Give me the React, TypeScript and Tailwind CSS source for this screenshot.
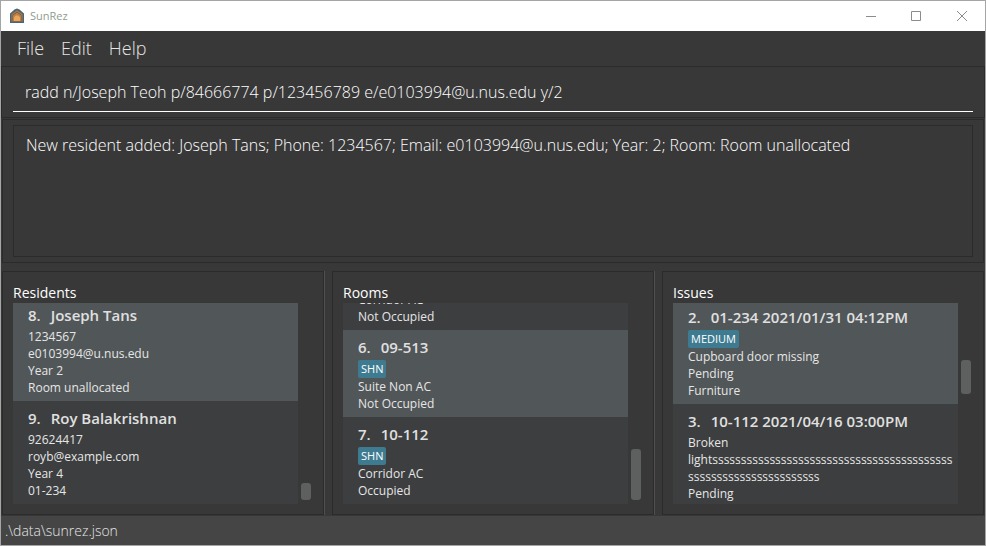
import { useLayoutEffect, useRef, useState } from "react";

type Item = {
  number?: string;
  title?: string;
  tag?: string;
  lines: string[];
  selected?: boolean;
};

type PanelData = {
  name: string;
  items: Item[];
  scroll: number;
  thumbTop: number;
  thumbHeight: number;
};

const panels: PanelData[] = [
  {
    name: "Residents",
    scroll: 5,
    thumbTop: 180,
    thumbHeight: 17,
    items: [
      {
        number: "8.",
        title: "Joseph Tans",
        lines: ["1234567", "e0103994@u.nus.edu", "Year 2", "Room unallocated"],
        selected: true,
      },
      {
        number: "9.",
        title: "Roy Balakrishnan",
        lines: ["92624417", "royb@example.com", "Year 4", "01-234"],
      },
    ],
  },
  {
    name: "Rooms",
    scroll: 17,
    thumbTop: 146,
    thumbHeight: 51,
    items: [
      { lines: ["Corridor AC", "Not Occupied"] },
      {
        number: "6.",
        title: "09-513",
        tag: "SHN",
        lines: ["Suite Non AC", "Not Occupied"],
        selected: true,
      },
      { number: "7.", title: "10-112", tag: "SHN", lines: ["Corridor AC", "Occupied"] },
    ],
  },
  {
    name: "Issues",
    scroll: 3,
    thumbTop: 57,
    thumbHeight: 34,
    items: [
      {
        number: "2.",
        title: "01-234 2021/01/31 04:12PM",
        tag: "MEDIUM",
        lines: ["Cupboard door missing", "Pending", "Furniture"],
        selected: true,
      },
      {
        number: "3.",
        title: "10-112 2021/04/16 03:00PM",
        lines: ["Broken", "light" + "s".repeat(65), "Pending"],
      },
    ],
  },
];

function HouseIcon() {
  return (
    <svg width="16" height="16" viewBox="0 0 16 16" aria-hidden="true">
      <path d="M1 5.500 5.500 1.500 8 .5l2.500 1L15 5.500V15H1z" fill="#4a6577" />
      <path d="M2.500 6.200 8 2.200l5.500 4V13h-11z" fill="#b87a3c" />
      <path d="M3.500 7 8 3.700 12.500 7v6h-9z" fill="#5f5a55" />
      <path d="M4 7.500 8 4.600l4 2.900V13H4z" fill="#bf8043" />
      <path d="M5 13V9.200L7 7.500h2l2 1.700V13z" fill="#eba65c" />
      <path d="M2 13.500h12" stroke="#7d6a55" />
    </svg>
  );
}

function Card({ item }: { item: Item }) {
  return (
    <li className={`px-[15px] py-[5px] ${item.selected ? "bg-[#515658]" : "bg-[#3c3e3f]"}`}>
      {item.title && (
        <h3
          className={`flex gap-2.5 text-[15px] leading-6 font-semibold text-[#e0e0e0] ${item.tag ? "" : "mb-px"}`}
        >
          <span>{item.number}</span>
          <span>{item.title}</span>
        </h3>
      )}
      {item.tag && (
        <div className="flex h-[19px] items-start pt-px">
          <span className="rounded-xs bg-[#3e7b91] px-[3px] text-[11px] leading-[18px] text-white">
            {item.tag}
          </span>
        </div>
      )}
      {item.lines.map((line, i) => (
        <p key={i} className="-mr-3 text-[12px] leading-[17px] break-all text-[#e6e6e6]">
          {line}
        </p>
      ))}
    </li>
  );
}

function Panel({ panel }: { panel: PanelData }) {
  const list = useRef<HTMLUListElement>(null);
  useLayoutEffect(() => {
    if (list.current) list.current.scrollTop = panel.scroll;
  }, [panel.scroll]);

  return (
    <section className="flex min-h-0 min-w-0 flex-col border border-[#2b2b2b] px-2.5 pt-[11px] pb-2.5">
      <h2 className="text-[14px] leading-5 text-white">{panel.name}</h2>
      <div className="flex min-h-0 flex-1 gap-[3px]">
        <ul ref={list} className="min-w-0 flex-1 overflow-y-auto [scrollbar-width:none]">
          {panel.items.map((item, i) => (
            <Card key={i} item={item} />
          ))}
        </ul>
        <div className="mr-0.5 w-2.5">
          <div
            className="rounded-[3px] bg-[#5e6060]"
            style={{ marginTop: panel.thumbTop, height: panel.thumbHeight }}
          />
        </div>
      </div>
    </section>
  );
}

export default function App() {
  const [command, setCommand] = useState(
    "radd n/Joseph Teoh p/84666774 p/123456789 e/e0103994@u.nus.edu y/2",
  );

  return (
    <div className="flex h-screen flex-col border border-[#a5a5a5] bg-[#383838] font-['Open_Sans','Noto_Sans',sans-serif]">
      <header className="flex h-[30px] shrink-0 items-center bg-white pl-2">
        <HouseIcon />
        <span className="ml-[5px] text-[11px] text-[#8f9c8f]">SunRez</span>
        <div className="ml-auto flex h-full text-[#8c8c8c]">
          <button aria-label="Minimize" className="flex w-11 items-center justify-center">
            <svg width="10" height="10" viewBox="0 0 10 10" stroke="currentColor">
              <path d="M0 5.500h10" />
            </svg>
          </button>
          <button aria-label="Maximize" className="flex w-[46px] items-center justify-center">
            <svg width="10" height="10" viewBox="0 0 10 10" stroke="currentColor" fill="none">
              <path d="M.5.500h9v9h-9z" />
            </svg>
          </button>
          <button aria-label="Close" className="flex w-[46px] items-center justify-center">
            <svg width="10" height="10" viewBox="0 0 10 10" stroke="currentColor">
              <path d="M0 0l10 10M10 0 0 10" />
            </svg>
          </button>
        </div>
      </header>

      <nav className="flex h-[35px] shrink-0 items-center gap-[17px] px-4 text-[18px] font-light text-[#e6e6e6]">
        <button>File</button>
        <button>Edit</button>
        <button>Help</button>
      </nav>

      <div className="shrink-0 border border-[#2b2b2b] px-[11px] pt-2 pb-[5px]">
        <input
          aria-label="Command"
          spellCheck={false}
          value={command}
          onChange={(e) => setCommand(e.target.value)}
          className="block h-[37px] w-full border-b border-white bg-transparent px-3 pb-0.5 text-[16px] font-light text-white outline-none"
        />
      </div>

      <div className="mx-px mt-px shrink-0 border border-[#2b2b2b] px-2.5 py-[5px]">
        <textarea
          aria-label="Result"
          readOnly
          spellCheck={false}
          value="New resident added: Joseph Tans; Phone: 1234567; Email: e0103994@u.nus.edu; Year: 2; Room: Room unallocated"
          className="block h-[132px] w-full resize-none border border-[#2b2b2b] bg-transparent px-3 py-[7px] text-[16px] leading-6 font-light text-white outline-none"
        />
      </div>

      <main className="mx-px mt-2 grid min-h-0 flex-1 grid-cols-[1fr_8px_1fr_8px_1fr] grid-rows-[minmax(0,1fr)]">
        <Panel panel={panels[0]} />
        <div className="border-l border-[#505050]" />
        <Panel panel={panels[1]} />
        <div className="border-l border-[#505050]" />
        <Panel panel={panels[2]} />
      </main>

      <footer className="mt-px flex h-[29px] shrink-0 items-center bg-[#454545] px-1 text-[14px] font-light text-[#e6e6e6]">
        .\data\sunrez.json
      </footer>
    </div>
  );
}
